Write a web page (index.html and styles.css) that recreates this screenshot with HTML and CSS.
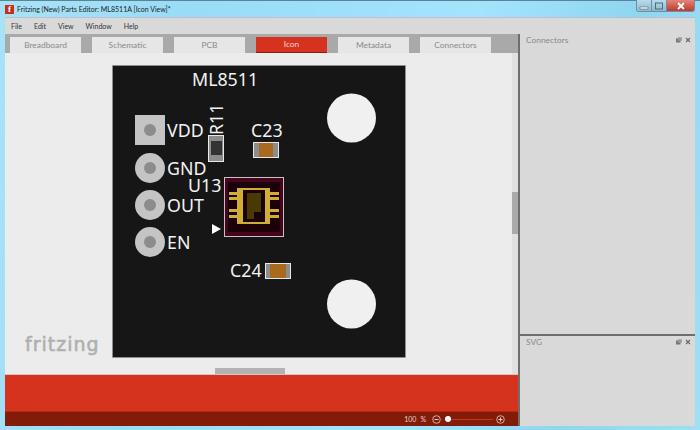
FILE: index.html
```html
<!DOCTYPE html>
<html lang="en">
<head>
    <meta charset="UTF-8">
    <title>Fritzing (New) Parts Editor: ML8511A [Icon View]*</title>
    <link rel="stylesheet" href="styles.css">
</head>
<body>
    <div class="window">
        <header class="titlebar">
            <span class="app-icon">f</span>
            <span class="title">Fritzing (New) Parts Editor: ML8511A [Icon View]*</span>
            <div class="win-buttons">
                <span class="win-btn">
                    <svg width="10" height="8" viewBox="0 0 10 8"><rect x="1" y="5" width="8" height="2" fill="#fff" stroke="#4a6a80" stroke-width="0.6"/></svg>
                </span>
                <span class="win-btn">
                    <svg width="10" height="8" viewBox="0 0 10 8"><rect x="1.5" y="1" width="7" height="6" fill="none" stroke="#4a6a80"/></svg>
                </span>
                <span class="win-btn win-close">
                    <svg width="10" height="8" viewBox="0 0 10 8"><path d="M2 1 L8 7 M8 1 L2 7" stroke="#fff" stroke-width="1.8"/></svg>
                </span>
            </div>
        </header>
        <nav class="menubar">
            <span>File</span>
            <span>Edit</span>
            <span>View</span>
            <span>Window</span>
            <span>Help</span>
        </nav>
        <div class="main">
            <section class="editor">
                <div class="tabs">
                    <div class="tab">Breadboard</div>
                    <div class="tab">Schematic</div>
                    <div class="tab">PCB</div>
                    <div class="tab tab-active">Icon</div>
                    <div class="tab">Metadata</div>
                    <div class="tab">Connectors</div>
                </div>
                <div class="canvas">
                    <svg class="logo" width="76" height="26" viewBox="0 0 76 26">
                        <text x="0" y="18" class="logo-text">fritzing</text>
                    </svg>
                    <svg class="board" width="294" height="293" viewBox="0 0 294 293">
                        <rect x="0.5" y="0.5" width="293" height="292" fill="#161616" stroke="#999" stroke-dasharray="1 1"/>
                        <text x="80" y="21" class="label">ML8511</text>

                        <circle cx="239.500" cy="53" r="24.500" fill="#f0f0f0"/>
                        <circle cx="239.500" cy="239" r="24.500" fill="#f0f0f0"/>

                        <rect x="23" y="50" width="30" height="30" fill="#c4c4c4"/>
                        <circle cx="38" cy="65" r="6" fill="#8c8c8c"/>
                        <circle cx="38" cy="103" r="15" fill="#c4c4c4"/>
                        <circle cx="38" cy="103" r="6" fill="#8c8c8c"/>
                        <circle cx="38" cy="140" r="15" fill="#c4c4c4"/>
                        <circle cx="38" cy="140" r="6" fill="#8c8c8c"/>
                        <circle cx="38" cy="177" r="15" fill="#c4c4c4"/>
                        <circle cx="38" cy="177" r="6" fill="#8c8c8c"/>
                        <text x="55" y="72" class="label">VDD</text>
                        <text x="55" y="110" class="label">GND</text>
                        <text x="55" y="147" class="label">OUT</text>
                        <text x="55" y="184" class="label">EN</text>

                        <text transform="translate(111 70) rotate(-90)" class="label">R11</text>
                        <rect x="96.500" y="70.500" width="15" height="26" fill="#8c8c8c" stroke="#e8e8e8"/>
                        <rect x="99" y="76" width="11" height="14" fill="#333"/>

                        <text x="139" y="72" class="label">C23</text>
                        <rect x="141.500" y="77.500" width="25" height="15" fill="#8c8c8c" stroke="#e8e8e8"/>
                        <rect x="147" y="78" width="14" height="14" fill="#a9691f"/>

                        <text x="118" y="212" class="label">C24</text>
                        <rect x="153.500" y="198.500" width="25" height="15" fill="#8c8c8c" stroke="#e8e8e8"/>
                        <rect x="158" y="199" width="16" height="14" fill="#a9691f"/>

                        <text x="76" y="127" class="label">U13</text>
                        <path d="M100 159 L109 164 L100 169 Z" fill="#fff"/>

                        <rect x="112.500" y="112.500" width="59" height="59" fill="#47041f" stroke="#c8c0c4"/>
                        <rect x="116" y="117" width="52" height="50" fill="#1a0208"/>
                        <g fill="#d0ae36">
                            <rect x="117" y="127" width="8" height="3"/>
                            <rect x="117" y="132" width="8" height="3"/>
                            <rect x="117" y="144" width="8" height="3"/>
                            <rect x="117" y="150" width="8" height="3"/>
                            <rect x="158" y="127" width="9" height="3"/>
                            <rect x="158" y="132" width="9" height="3"/>
                            <rect x="158" y="144" width="9" height="3"/>
                            <rect x="158" y="150" width="9" height="3"/>
                            <rect x="125" y="123" width="33" height="36"/>
                        </g>
                        <rect x="131" y="125" width="22" height="32" fill="#1a0208"/>
                        <path d="M135 128 H149 V147 H142 V154 H135 Z" fill="#473a04"/>
                    </svg>
                    <div class="vscroll"><div class="vthumb"></div></div>
                    <div class="hthumb"></div>
                </div>
                <div class="red-band"></div>
                <div class="statusbar">
                    <span class="zoom-val">100</span>
                    <span class="zoom-unit">%</span>
                    <svg class="zoom-btn" width="9" height="9" viewBox="0 0 9 9"><circle cx="4.500" cy="4.500" r="3.800" fill="none" stroke="#e8cfc8" stroke-width="0.8"/><path d="M2.500 4.500 H6.500" stroke="#e8cfc8"/></svg>
                    <div class="slider"><span class="knob"></span></div>
                    <svg class="zoom-btn" width="9" height="9" viewBox="0 0 9 9"><circle cx="4.500" cy="4.500" r="3.800" fill="none" stroke="#e8cfc8" stroke-width="0.8"/><path d="M2.500 4.500 H6.500 M4.500 2.500 V6.500" stroke="#e8cfc8"/></svg>
                </div>
            </section>
            <aside class="docks">
                <div class="dock dock-connectors">
                    <div class="dock-head">
                        <span>Connectors</span>
                        <span class="dock-icons">
                            <svg width="6" height="6" viewBox="0 0 6 6"><rect x="0" y="1.500" width="4.500" height="4" fill="#777"/><rect x="1.800" y="0.300" width="4" height="3.500" fill="#999"/></svg>
                            <svg width="6" height="6" viewBox="0 0 6 6"><path d="M1 1 L5 5 M5 1 L1 5" stroke="#666" stroke-width="1.100"/></svg>
                        </span>
                    </div>
                </div>
                <div class="dock dock-svg">
                    <div class="dock-head">
                        <span>SVG</span>
                        <span class="dock-icons">
                            <svg width="6" height="6" viewBox="0 0 6 6"><rect x="0" y="1.500" width="4.500" height="4" fill="#777"/><rect x="1.800" y="0.300" width="4" height="3.500" fill="#999"/></svg>
                            <svg width="6" height="6" viewBox="0 0 6 6"><path d="M1 1 L5 5 M5 1 L1 5" stroke="#666" stroke-width="1.100"/></svg>
                        </span>
                    </div>
                </div>
            </aside>
        </div>
    </div>
</body>
</html>
```

FILE: styles.css
```css
/* General Styles */
html, body {
    margin: 0;
    padding: 0;
    height: 100%;
    overflow: hidden;
    font-family: Lato, "Open Sans", sans-serif;
}

/* Window frame */
.window {
    width: 700px;
    height: 430px;
    box-sizing: border-box;
    padding: 0 5px 4px 5px;
    display: flex;
    flex-direction: column;
    background: linear-gradient(100deg, #a9e2f7 0%, #98dcf6 25%, #a3e4fd 62%, #8fd6ef 82%, #a0dff5 100%);
    border-top: 1px solid #5e8196;
}

.titlebar {
    height: 16px;
    flex: none;
    display: flex;
    align-items: center;
    gap: 3px;
}

.app-icon {
    width: 9px;
    height: 9px;
    background: #c8301c;
    color: #fff;
    font: bold 9px/9px "Liberation Serif", serif;
    text-align: center;
}

.title {
    font-size: 7px;
    color: #222;
    flex: 1;
}

.win-buttons {
    display: flex;
    align-self: flex-start;
    margin-top: -1px;
    border-radius: 0 0 3px 3px;
    overflow: hidden;
    border: 1px solid #6d8ea3;
    border-top: none;
}

.win-btn {
    width: 15px;
    height: 11px;
    box-sizing: border-box;
    display: flex;
    align-items: center;
    justify-content: center;
    background: linear-gradient(#b9dcea, #8fb8cc);
    border-right: 1px solid #6d8ea3;
}

.win-close {
    width: 27px;
    background: linear-gradient(#e2857a, #c0392b);
    border-right: none;
}

.menubar {
    height: 17px;
    flex: none;
    display: flex;
    align-items: center;
    gap: 12px;
    padding-left: 6px;
    background: #d9d9d9;
    font-size: 7px;
    color: #333;
    border-top: 1px solid #b4c4cc;
    box-sizing: border-box;
}

/* Main area */
.main {
    flex: 1;
    display: flex;
    min-height: 0;
}

.editor {
    width: 513px;
    flex: none;
    display: flex;
    flex-direction: column;
}

.tabs {
    height: 19px;
    flex: none;
    box-sizing: border-box;
    padding: 3px 0 0 5px;
    display: flex;
    gap: 11px;
    background: #a9a9a9;
}

.tab {
    width: 71px;
    background: #e6e6e6;
    color: #8a8a8a;
    font-size: 8.400px;
    line-height: 16px;
    text-align: center;
}

.tab-active {
    background: #d7321f;
    color: #f0d8d0;
    border-bottom: 1px solid #8a1d0c;
    line-height: 15px;
}

.canvas {
    position: relative;
    height: 321px;
    flex: none;
    background: #ececec;
}

.logo {
    position: absolute;
    left: 20px;
    top: 280px;
}

.logo-text {
    font-family: "DejaVu Sans", sans-serif;
    font-size: 19px;
    fill: #b0b0b0;
    stroke: #b0b0b0;
    stroke-width: 0.6px;
    letter-spacing: 1px;
}

.board {
    position: absolute;
    left: 107px;
    top: 12px;
}

.label {
    font-family: "Noto Sans", sans-serif;
    font-size: 17.800px;
    fill: #f2f2f2;
}

.vscroll {
    position: absolute;
    right: 0;
    top: 0;
    bottom: 0;
    width: 6px;
    background: #e0e0e0;
}

.vthumb {
    margin-top: 139px;
    height: 42px;
    background: #aaaaaa;
}

.hthumb {
    position: absolute;
    left: 210px;
    bottom: 0;
    width: 70px;
    height: 6px;
    background: #b2b2b2;
}

.red-band {
    flex: 1;
    background: #d6331f;
    border-top: 1px solid #d8c4bc;
}

.statusbar {
    height: 14px;
    flex: none;
    display: flex;
    align-items: center;
    justify-content: flex-end;
    gap: 4px;
    padding-right: 13px;
    background: #821c08;
    border-top: 1px solid #b02a14;
    color: #e8cfc8;
    font-size: 7px;
}

.zoom-unit {
    margin-right: 2px;
}

.slider {
    position: relative;
    width: 48px;
    height: 1px;
    margin-right: -1px;
    background: #c8341f;
}

.knob {
    position: absolute;
    left: 0;
    top: -3px;
    width: 6px;
    height: 6px;
    border-radius: 50%;
    background: #fff;
}

/* Right docks */
.docks {
    flex: 1;
    display: flex;
    flex-direction: column;
    border-left: 2px solid #6e6e6e;
    box-sizing: border-box;
}

.dock {
    background: #d9d9d9;
}

.dock-connectors {
    height: 300px;
    flex: none;
}

.dock-svg {
    flex: 1;
    border-top: 2px solid #6e6e6e;
}

.dock-head {
    display: flex;
    justify-content: space-between;
    align-items: center;
    padding: 0 4px 0 6px;
    height: 12px;
    font-size: 8.400px;
    color: #8a8a8a;
}

.dock-icons {
    display: flex;
    gap: 3px;
}
```
